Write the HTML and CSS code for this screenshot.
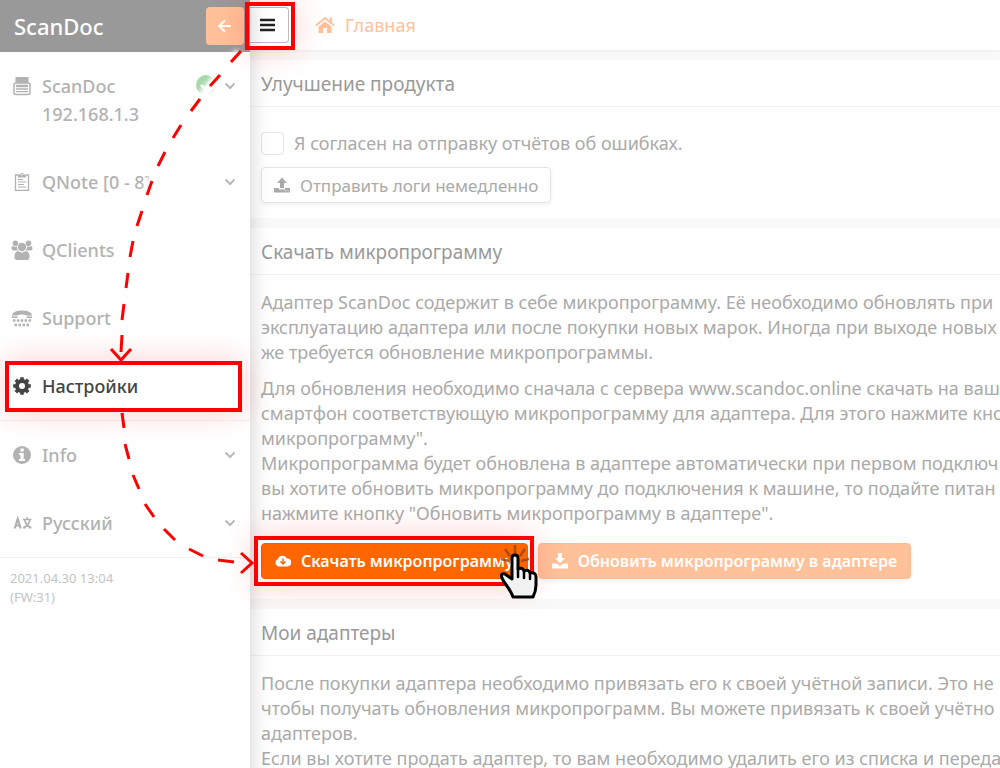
FILE: index.html
```html
<!DOCTYPE html>
<html lang="ru">
<head>
<meta charset="utf-8">
<title>ScanDoc</title>
<link rel="stylesheet" href="styles.css">
</head>
<body>
<div class="app">
  <aside class="sidebar">
    <header class="brand">
      <span class="brand-name">ScanDoc</span>
      <button class="back" type="button" aria-label="Назад">
        <svg width="14" height="14" viewBox="0 0 14 14"><path d="M13 7H1.5M7 1.2L1.2 7L7 12.8" fill="none" stroke="currentColor" stroke-width="2"/></svg>
      </button>
    </header>
    <nav class="menu">
      <a class="item" href="#device">
        <svg class="icon" viewBox="0 0 20 20"><path fill="currentColor" d="M3.500 1h13v6h-13z"/><rect x="2" y="7" width="16" height="11.500" rx="2" fill="#fff" stroke="currentColor" stroke-width="1.500"/><path d="M5 10h10" stroke="currentColor" stroke-width="2.400" stroke-linecap="round"/><path d="M4 13h12M4 15.700h12" stroke="currentColor" stroke-width="1.300"/></svg>
        <span class="label">ScanDoc<br>192.168.1.3</span>
        <svg class="ok" viewBox="0 0 20 20"><circle cx="10" cy="10" r="10" fill="#a9d8ab"/><path d="M5 10l4 4l7-8" fill="none" stroke="#fff" stroke-width="2.600"/></svg>
        <svg class="chevron" viewBox="0 0 12 8"><path d="M1.500 1.500L6 6L10.500 1.500"/></svg>
      </a>
      <a class="item" href="#qnote">
        <svg class="icon" viewBox="0 0 20 20"><path d="M6 3H3.500v15.300h13V3H14" fill="none" stroke="currentColor" stroke-width="1.300"/><path fill="currentColor" d="M6 2.500h2.300a1.800 1.800 0 0 1 3.500 0H14v3H6z"/><circle cx="10" cy="2.800" r=".8" fill="#fff"/><path d="M6 7.500h5M6 10h8M6 12.500h6M6 15h8" stroke="currentColor" stroke-width="1.200"/></svg>
        <span class="label">QNote [0 - 8]</span>
        <svg class="chevron" viewBox="0 0 12 8"><path d="M1.500 1.500L6 6L10.500 1.500"/></svg>
      </a>
      <a class="item" href="#qclients">
        <svg class="icon wide" viewBox="0 0 22 20"><g fill="currentColor"><circle cx="4.500" cy="3.200" r="2.800"/><circle cx="17.500" cy="3.200" r="2.800"/><circle cx="11" cy="7" r="4.200"/><path d="M3 6.500Q4.500 7.300 6 6.300Q5.700 9 7.300 10.500H2.500Q.5 10.500.5 8.700Q.6 6 1.500 6zM19 6.500Q17.500 7.300 16 6.300Q16.300 9 14.700 10.500h4.800q2 0 2-1.800Q21.400 6 20.500 6zM7.300 11Q11 14 14.700 11Q18.500 11.500 18.500 17q0 3-2.500 3H6q-2.500 0-2.500-3Q3.500 11.500 7.300 11z"/></g></svg>
        <span class="label">QClients</span>
      </a>
      <a class="item" href="#support">
        <svg class="icon wide" viewBox="0 0 22 20"><path fill="currentColor" d="M1 8Q1 2.500 11 2.500T21 8v2h-5.500V7.200Q11 5.800 6.500 7.200V10H1z"/><path d="M1 8h20" stroke="#fff" stroke-width=".8"/><path d="M2 12.500h18" stroke="currentColor" stroke-width="2.300" stroke-dasharray="2.500 1.350"/><path d="M3.500 17h15.500" stroke="currentColor" stroke-width="2.300" stroke-dasharray="2.500 1.500"/></svg>
        <span class="label">Support</span>
      </a>
      <a class="item active" href="#settings">
        <svg class="icon" viewBox="0 0 20 20"><circle cx="10" cy="10" r="5" fill="none" stroke="currentColor" stroke-width="4"/><path d="M10 1.200v3M10 15.800v3M1.200 10h3M15.800 10h3M3.800 3.800L6 6M14 14l2.200 2.200M3.800 16.200L6 14M14 6l2.200-2.200" stroke="currentColor" stroke-width="3.600"/></svg>
        <span class="label">Настройки</span>
      </a>
      <a class="item divided" href="#info">
        <svg class="icon" viewBox="0 0 20 20"><circle cx="10" cy="10" r="9" fill="currentColor"/><path fill="#fff" d="M8.500 3.500h3.200v3H8.500zM7 8h4.700v6H13v2H7v-2h1.500v-4H7z"/></svg>
        <span class="label">Info</span>
        <svg class="chevron" viewBox="0 0 12 8"><path d="M1.500 1.500L6 6L10.500 1.500"/></svg>
      </a>
      <a class="item" href="#language">
        <svg class="icon" viewBox="0 0 20 20"><g fill="none" stroke="currentColor"><path d="M2.700 15.500L5.700 6L8.700 15.500M3.600 12.500h4.200" stroke-width="2.200"/><path d="M11 6.500h8.500M15.200 4.300v2.200M12.500 6.500q1 5.500 6.800 8.300M18 6.500q-1 5.500-6.500 8.300M11 14.800h3M16.500 14.800h3" stroke-width="1.600"/></g></svg>
        <span class="label">Русский</span>
        <svg class="chevron" viewBox="0 0 12 8"><path d="M1.500 1.500L6 6L10.500 1.500"/></svg>
      </a>
    </nav>
    <footer class="version">2021.04.30 13:04<br>(FW:31)</footer>
  </aside>

  <main class="main">
    <header class="topbar">
      <button class="burger" type="button" aria-label="Меню">
        <svg width="15" height="14" viewBox="0 0 15 14"><path d="M0 2h15M0 7h15M0 12h15" stroke="currentColor" stroke-width="2.600"/></svg>
      </button>
      <a class="home" href="#home">
        <svg width="20" height="18" viewBox="0 0 20 18"><path d="M1 9.500L10 2l9 7.500" fill="none" stroke="currentColor" stroke-width="2"/><path fill="currentColor" d="M14.500 1.500H17v5l-2.500-2zM3.500 10.800L10 5.400l6.500 5.400V17h-4.700v-5H8.200v5H3.500z"/></svg>
        <span>Главная</span>
      </a>
    </header>

    <section class="card">
      <h2>Улучшение продукта</h2>
      <div class="card-body consent">
        <label class="check"><input type="checkbox"><span>Я согласен на отправку отчётов об ошибках.</span></label>
        <button class="btn" type="button">
          <svg class="btn-icon" viewBox="0 0 16 16"><path fill="currentColor" d="M8 .5L13 6H10v5H6V6H3zM0 11h5v1.500h6V11h5v4.500H0z"/><path d="M11 13.700h1M13.500 13.700h1" stroke="#fff"/></svg>
          <span>Отправить логи немедленно</span>
        </button>
      </div>
    </section>

    <section class="card">
      <h2>Скачать микропрограмму</h2>
      <div class="card-body">
        <p>Адаптер ScanDoc содержит в себе микропрограмму. Её необходимо обновлять при<br>эксплуатацию адаптера или после покупки новых марок. Иногда при выходе новых<br>же требуется обновление микропрограммы.</p>
        <p>Для обновления необходимо сначала с сервера www.scandoc.online скачать на ваш<br>смартфон соответствующую микропрограмму для адаптера. Для этого нажмите кно<br>микропрограмму".<br>Микропрограмма будет обновлена в адаптере автоматически при первом подключ<br>вы хотите обновить микропрограмму до подключения к машине, то подайте питан<br>нажмите кнопку "Обновить микропрограмму в адаптере".</p>
        <div class="actions">
          <button class="btn primary" type="button">
            <svg class="btn-icon" viewBox="0 0 16 16"><path fill="currentColor" d="M4 13.500A3.800 3.800 0 0 1 2.800 6.200A5 5 0 0 1 12 5.500A4 4 0 0 1 12.500 13.500z"/><path d="M8 5.500v5M5.500 8.500L8 11l2.500-2.500" fill="none" stroke="#f60" stroke-width="1.500"/></svg>
            <span>Скачать микропрограмму</span>
          </button>
          <button class="btn primary pale" type="button">
            <svg class="btn-icon" viewBox="0 0 16 16"><path fill="currentColor" d="M6 0h4v5h3L8 10.500L3 5h3zM0 10.500h4.500L8 13l3.500-2.500H16v5H0z"/></svg>
            <span>Обновить микропрограмму в адаптере</span>
          </button>
        </div>
      </div>
    </section>

    <section class="card">
      <h2>Мои адаптеры</h2>
      <div class="card-body">
        <p>После покупки адаптера необходимо привязать его к своей учётной записи. Это не<br>чтобы получать обновления микропрограмм. Вы можете привязать к своей учётно<br>адаптеров.<br>Если вы хотите продать адаптер, то вам необходимо удалить его из списка и переда</p>
      </div>
    </section>
  </main>

  <svg class="guide" width="560" height="620" viewBox="0 0 560 620" aria-hidden="true">
    <defs><filter id="soft" x="-20%" y="-20%" width="140%" height="140%"><feGaussianBlur stdDeviation="2"/></filter></defs>
    <path d="M240 53Q205 91 180 128Q160 160 147 195" fill="none" stroke="#fff" stroke-width="11" filter="url(#soft)"/>
    <g fill="none" stroke="#f00" stroke-width="3">
      <path d="M241 51L231 62M220 75L210 86M200 99L191 111M181 125L173 138M165 152L158 166M152 181L147 195M142 211L137 226M133 241L130 257M128 273L126 288M124 304L122 320M122 335L121 352M111 349L121 360L131 349"/>
      <path d="M122 413L124 428M125 444L129 459M133 475L139 489M145 504L154 517M164 529L175 540M189 549L203 556M218 560L234 562M241 553L252 563L241 573"/>
    </g>
  </svg>
  <div class="frame frame-burger"></div>
  <div class="frame frame-settings"></div>
  <div class="frame frame-download"></div>
  <svg class="pointer" width="38" height="56" viewBox="0 0 38 56" aria-hidden="true">
    <path d="M15 2v9M5 6l5 7M25 6l-5 7M1 16l8 2M29 16l-8 2" stroke="#96430c" stroke-width="2.500" fill="none" opacity=".8"/>
    <path d="M12 36V15q0-3 3-3t3 3v11q5-2 6 2q5-2 6 2q6-1 6 4v8q0 6-3 12H13Q11 48 4 39L2 35q-2-5 3-4z" fill="#f2f2f2" stroke="#000" stroke-width="3" stroke-linejoin="round"/>
    <path d="M18 25v9M24 28v7M30 30v6" stroke="#000" stroke-width="2.500" stroke-linecap="round"/>
  </svg>
</div>
</body>
</html>
```
FILE: styles.css
```css
* { box-sizing: border-box; }

body {
  margin: 0;
  overflow: hidden;
  background: #fff;
  font-family: "Noto Sans", "Open Sans", sans-serif;
  font-size: 18px;
  line-height: 25px;
  color: #aaa;
}

a { color: inherit; text-decoration: none; }
button { font: inherit; color: inherit; }

.app {
  position: relative;
  display: grid;
  grid-template-columns: 250px minmax(0, 1fr);
  height: 100vh;
  overflow: hidden;
}

.sidebar {
  position: relative;
  background: #fff;
  box-shadow: 0 0 20px rgba(0, 0, 0, 0.2);
}

.brand {
  display: flex;
  align-items: center;
  justify-content: space-between;
  height: 52px;
  padding: 0 6px 0 14px;
  background: #999;
  color: #fff;
}

.brand-name { font-size: 22px; font-weight: 500; }

.back {
  display: flex;
  align-items: center;
  justify-content: center;
  width: 38px;
  height: 38px;
  padding: 0;
  border: 0;
  border-radius: 4px;
  background: #ffc199;
  color: #fff;
}

.item {
  display: flex;
  align-items: flex-start;
  gap: 10px;
  padding: 20px 14px 20px 12px;
  font-size: 18px;
  line-height: 28px;
  font-weight: 500;
  color: #b2b2b2;
}

.item.active { color: #444; }
.item.divided { border-top: 1px solid #f2f2f2; }
.label { flex: 1; white-space: nowrap; }
.icon { width: 20px; height: 20px; margin-top: 4px; flex: none; }
.icon.wide { width: 22px; margin: 4px -1px 0; }
.ok { width: 20px; height: 20px; margin: 3px -2px 0 0; }
.chevron { width: 12px; height: 8px; margin-top: 10px; }
.chevron path { fill: none; stroke: #b8b8b8; stroke-width: 2; }

.version {
  padding: 11px 10px;
  border-top: 1px solid #f2f2f2;
  font-size: 13px;
  line-height: 19px;
  color: #c4c4c4;
}

.main { background: #f9f9f9; white-space: nowrap; }

.topbar {
  display: flex;
  align-items: center;
  gap: 26px;
  height: 50px;
  background: #fff;
  box-shadow: 0 1px 3px rgba(0, 0, 0, 0.06);
}

.burger {
  display: flex;
  align-items: center;
  justify-content: center;
  width: 39px;
  height: 36px;
  padding: 0 4px 0 0;
  border: 1px solid #bbb;
  border-left: 0;
  border-radius: 0 4px 4px 0;
  background: #fff;
  color: #222;
}

.home {
  display: flex;
  align-items: center;
  gap: 10px;
  font-size: 18px;
  color: #ffc199;
}

.card { margin-top: 10px; background: #fff; }

h2 {
  margin: 0;
  padding: 12px 11px 9px;
  border-bottom: 1px solid #f2f2f2;
  font-size: 19px;
  line-height: 25px;
  font-weight: 400;
  color: #999;
}

.card-body { padding: 15px 11px 20px; }
.consent { padding: 24px 11px 15px; }
p { margin: 0 0 11px; }

.check { display: flex; align-items: center; gap: 10px; margin-bottom: 11px; }

.check input {
  appearance: none;
  width: 23px;
  height: 23px;
  margin: 0;
  border: 1px solid #e5e5e5;
  border-radius: 4px;
  background: #fff;
}

.btn {
  display: flex;
  align-items: center;
  gap: 10px;
  height: 36px;
  padding: 0 12px;
  border: 1px solid #e5e5e5;
  border-radius: 4px;
  background: #fff;
  box-shadow: 0 2px 5px rgba(0, 0, 0, 0.06);
  font-size: 17px;
  color: #aaa;
}

.btn-icon { width: 16px; height: 16px; flex: none; }
.actions { display: flex; gap: 10px; margin-top: 17px; }
.btn.primary { padding: 0 13px; border-color: #f26100; background: #f60; color: #fff; font-size: 16px; font-weight: 600; }
.btn.primary.pale { border-color: #ffba8e; background: #ffc199; }

.guide { position: absolute; left: 0; top: 0; }

.frame {
  position: absolute;
  border: 4px solid #f00;
  box-shadow: 0 0 32px rgba(255, 0, 0, 0.2);
}

.frame-burger { left: 245px; top: 2px; width: 50px; height: 48px; }
.frame-settings { left: 5px; top: 361px; width: 237px; height: 51px; }
.frame-download { left: 254px; top: 536px; width: 280px; height: 50px; }
.pointer { position: absolute; left: 500px; top: 543px; }
```
